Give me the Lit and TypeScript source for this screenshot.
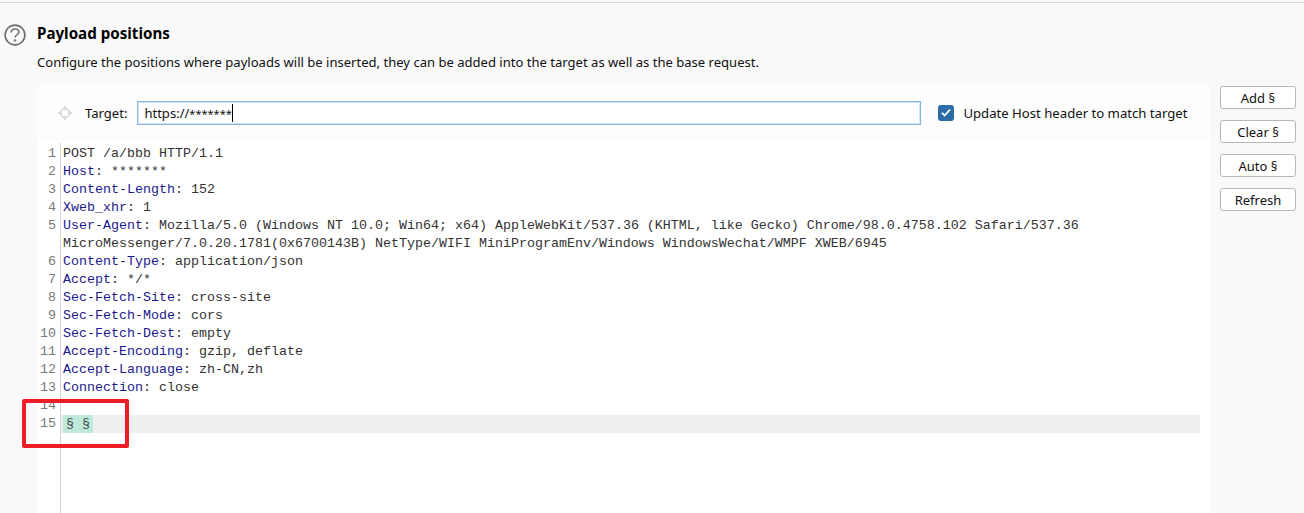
import { LitElement, html, css } from "lit";
import { customElement } from "lit/decorators.js";

const lines: { n?: number; key?: string; val: string }[] = [
  { n: 1, val: "POST /a/bbb HTTP/1.1" },
  { n: 2, key: "Host", val: " *******" },
  { n: 3, key: "Content-Length", val: " 152" },
  { n: 4, key: "Xweb_xhr", val: " 1" },
  { n: 5, key: "User-Agent", val: " Mozilla/5.0 (Windows NT 10.0; Win64; x64) AppleWebKit/537.36 (KHTML, like Gecko) Chrome/98.0.4758.102 Safari/537.36" },
  { val: "MicroMessenger/7.0.20.1781(0x6700143B) NetType/WIFI MiniProgramEnv/Windows WindowsWechat/WMPF XWEB/6945" },
  { n: 6, key: "Content-Type", val: " application/json" },
  { n: 7, key: "Accept", val: " */*" },
  { n: 8, key: "Sec-Fetch-Site", val: " cross-site" },
  { n: 9, key: "Sec-Fetch-Mode", val: " cors" },
  { n: 10, key: "Sec-Fetch-Dest", val: " empty" },
  { n: 11, key: "Accept-Encoding", val: " gzip, deflate" },
  { n: 12, key: "Accept-Language", val: " zh-CN,zh" },
  { n: 13, key: "Connection", val: " close" },
  { n: 14, val: "" },
];

@customElement("app-root")
export class AppRoot extends LitElement {
  static styles = css`
    :host { display: block; width: 1304px; height: 513px; overflow: hidden; position: relative; background: #f9f9f9;
      font-family: "Noto Sans", "Open Sans", sans-serif; color: #111; }
    .rule { height: 1px; margin-top: 2px; background: #d6d6d6; }
    .head { display: flex; align-items: center; height: 40px; margin-top: 10px; padding-left: 4px; gap: 11px; }
    .head h1 { font-size: 15.15px; font-weight: 700; margin: 0; line-height: 20px; color: #000; }
    .help { width: 22px; height: 22px; flex: none; position: relative; top: 2px; }
    .desc { font-size: 13.05px; line-height: 18px; padding-left: 37px; margin-top: 0; color: #111; }
    .main { display: flex; margin: 14px 0 0 37px; gap: 10px; align-items: flex-start; }
    .panel { width: 1173px; flex: none; height: 428px; background: #fff; display: flex; flex-direction: column; overflow: hidden; }
    .target { height: 55px; flex: none; background: #fdfdfd; display: flex; align-items: center; padding: 0 0 0 21px; font-size: 13.05px; }
    .crosshair { width: 14px; height: 14px; flex: none; margin-right: 13px; }
    .input { width: 784px; height: 24px; box-sizing: border-box; border: 1px solid #8ab4de; background: #fff;
      margin-left: 10px; padding-left: 6px; display: flex; align-items: center; box-shadow: 0 0 0 1px #d5e4f3 inset; }
    .stars { font-size: 11px; }
    .caret { width: 1px; height: 18px; background: #000; }
    .check { width: 16px; height: 16px; border-radius: 3px; background: #2e6ca8; flex: none; margin-left: 17px; margin-right: 9px;
      display: flex; align-items: center; justify-content: center; }
    .host { font-size: 13.15px; }
    .editor { flex: 1; margin-top: 3px; display: grid; grid-template-columns: 24px 1fr; font: 13.333px/18px "Liberation Mono", monospace; background: #fff; }
    .gutter { border-right: 1px solid #d4d4d4; padding-top: 2px; color: #7a7a7a; text-align: right; padding-right: 4px; box-sizing: border-box; width: 24px; }
    .gutter div { height: 18px; }
    .code { padding-left: 2px; padding-top: 2px; color: #333; }
    .code div { height: 18px; white-space: pre; }
    .k { color: #1a1a8c; }
    .code .cur { background: #efefef; margin-left: -2px; padding-left: 2px; margin-right: 10px; }
    .mark { background: #bfe9db; padding-left: 3px; display: inline-block; height: 18px; width: 30px; box-sizing: border-box; color: #444; }
    .btns { display: flex; flex-direction: column; gap: 11px; padding-top: 1px; }
    .btn { width: 76px; height: 23px; box-sizing: border-box; border: 1px solid #bbb6b6; border-radius: 3px; background: #fff;
      font-size: 13px; color: #111; display: flex; align-items: center; justify-content: center; }
    .red { position: absolute; left: 22px; top: 399px; width: 107px; height: 49px; box-sizing: border-box; border: 4px solid #ee1c25; border-radius: 2px; }
  `;

  render() {
    return html`
      <div class="rule"></div>
      <div class="head">
        <svg class="help" viewBox="0 0 22 22">
          <circle cx="11" cy="11" r="9.9" fill="none" stroke="#6e6e6e" stroke-width="1.6"></circle>
          <path d="M7.2 8.6c0-2.2 1.6-3.6 3.8-3.6s3.8 1.3 3.8 3.2c0 2.7-3.8 2.7-3.8 5.4" fill="none" stroke="#777" stroke-width="1.7"></path>
          <circle cx="11" cy="16.4" r="1.2" fill="#777"></circle>
        </svg>
        <h1>Payload positions</h1>
      </div>
      <div class="desc">Configure the positions where payloads will be inserted, they can be added into the target as well as the base request.</div>
      <div class="main">
        <div class="panel">
          <div class="target">
            <svg class="crosshair" viewBox="0 0 14 14" fill="none" stroke="#d4d4d4" stroke-width="1.5">
              <circle cx="7" cy="7" r="4.6"></circle>
              <path d="M7 0v4M7 10v4M0 7h4M10 7h4"></path>
            </svg>
            <span>Target:</span>
            <div class="input"><span>https://<span class="stars">*******</span></span><span class="caret"></span></div>
            <div class="check">
              <svg width="10" height="9" viewBox="0 0 10 9"><path d="M1 4.8l2.7 2.7L9 1.5" fill="none" stroke="#fff" stroke-width="1.8"></path></svg>
            </div>
            <span class="host">Update Host header to match target</span>
          </div>
          <div class="editor">
            <div class="gutter">
              ${lines.map((l) => html`<div>${l.n ?? ""}</div>`)}
              <div>15</div>
            </div>
            <div class="code">
              ${lines.map((l) => html`<div>${l.key ? html`<span class="k">${l.key}</span>:` : ""}${l.val}</div>`)}
              <div class="cur"><span class="mark">§ §</span></div>
            </div>
          </div>
        </div>
        <div class="btns">
          <div class="btn">Add §</div>
          <div class="btn">Clear §</div>
          <div class="btn">Auto §</div>
          <div class="btn">Refresh</div>
        </div>
      </div>
      <div class="red"></div>
    `;
  }
}
